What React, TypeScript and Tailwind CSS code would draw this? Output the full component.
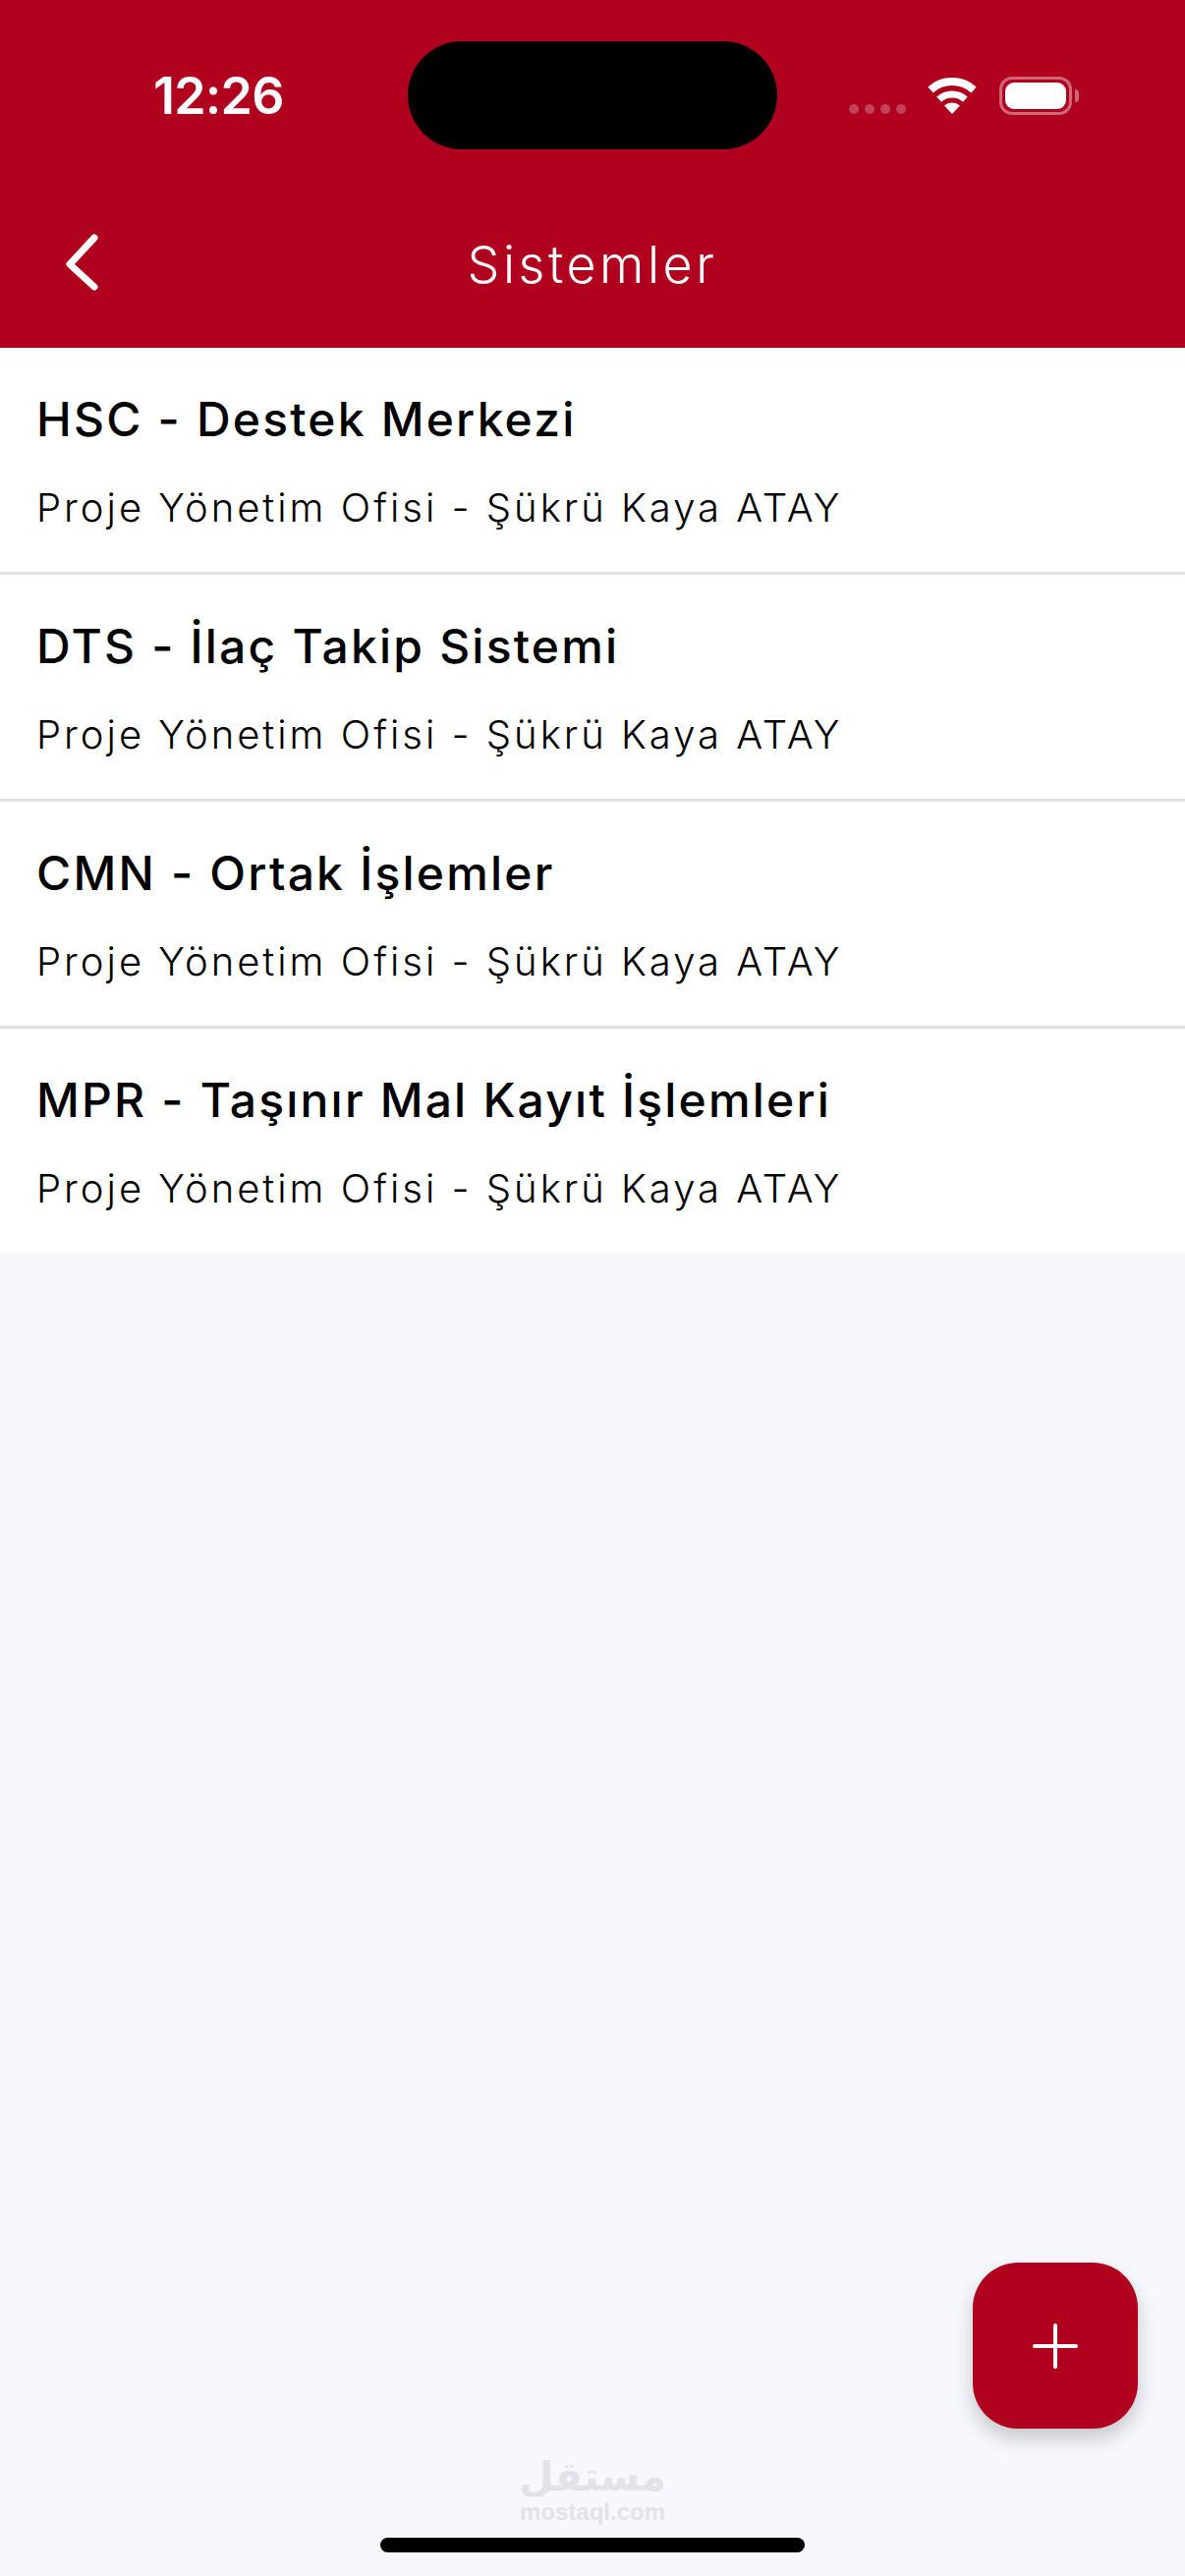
const systems = [
  "HSC - Destek Merkezi",
  "DTS - İlaç Takip Sistemi",
  "CMN - Ortak İşlemler",
  "MPR - Taşınır Mal Kayıt İşlemleri",
];

const StatusBar = () => (
  <div className="flex items-start pt-[42px] h-[152px]">
    <span className="w-[415px] pl-[156px] pt-[25px] shrink-0 text-[52px] leading-[62px] font-semibold text-white tracking-[-0.8px] whitespace-nowrap">
      12:26
    </span>
    <div className="w-[376px] h-[110px] shrink-0 rounded-[55px] bg-black" />
    <div className="flex items-center gap-[6px] ml-[73px] mt-[64px] shrink-0">
      <span className="w-[10px] h-[10px] rounded-full bg-white/25" />
      <span className="w-[10px] h-[10px] rounded-full bg-white/25" />
      <span className="w-[10px] h-[10px] rounded-full bg-white/25" />
      <span className="w-[10px] h-[10px] rounded-full bg-white/25" />
    </div>
    <svg className="ml-[22px] mt-[37px] shrink-0" width="50" height="37" viewBox="0 0 50 37" fill="none">
      <path d="M3 12.5A33 33 0 0 1 47 12.5" stroke="white" strokeWidth="8" />
      <path d="M11.6 22.1A20 20 0 0 1 38.4 22.1" stroke="white" strokeWidth="7" />
      <path d="M25 37L17 28.5A12 12 0 0 1 33 28.5Z" fill="white" />
    </svg>
    <div className="flex items-center ml-[23px] mt-[36px] shrink-0">
      <div className="w-[74px] h-[39px] rounded-[13px] border-[3px] border-white/40 p-[3px]">
        <div className="w-full h-full rounded-[9px] bg-white" />
      </div>
      <div className="w-[4px] h-[13px] ml-[3px] rounded-r-full bg-white/40" />
    </div>
  </div>
);

const Header = () => (
  <header className="h-[354px] bg-[#b0021f] flex flex-col">
    <StatusBar />
    <div className="relative flex-1 flex items-center justify-center">
      <svg className="absolute left-[64px] top-[86px]" width="40" height="60" viewBox="0 0 40 60" fill="none">
        <path d="M32 4L7 31L32 54" stroke="white" strokeWidth="7" strokeLinecap="round" strokeLinejoin="round" />
      </svg>
      <h1 className="mt-[34px] text-[52px] leading-[60px] font-light text-white tracking-[3.5px]">Sistemler</h1>
    </div>
  </header>
);

const App = () => {
  return (
    <div className="relative w-[1206px] h-[2622px] overflow-hidden bg-[#f7f8fd] flex flex-col font-['Inter',sans-serif]">
      <Header />
      <ul className="bg-white">
        {systems.map((name, i) => (
          <li key={name} className={i < systems.length - 1 ? "h-[231px] border-b-[3px] border-[#e0e0e6] pl-[37px]" : "h-[228px] pl-[37px]"}>
            <p className="pt-[45px] text-[48px] leading-[56px] font-[470] text-black tracking-[2.2px] whitespace-nowrap">{name}</p>
            <p className="pt-[39px] text-[40px] leading-[46px] font-light text-black tracking-[3px] whitespace-nowrap">
              Proje Yönetim Ofisi - Şükrü Kaya ATAY
            </p>
          </li>
        ))}
      </ul>
      <div className="flex-1" />
      <div className="flex flex-col items-center text-[#e2e2e8] font-['DejaVu_Sans',sans-serif] font-bold">
        <span className="text-[41px] leading-[44px]" dir="rtl">مستقل</span>
        <span className="mt-[2px] text-[24px] leading-[24px] font-['Liberation_Sans',sans-serif]">mostaql.com</span>
      </div>
      <div className="flex justify-center pt-[14px] pb-[24px]">
        <div className="w-[432px] h-[15px] rounded-full bg-black" />
      </div>
      <button type="button" className="absolute left-[990px] top-[2303px] w-[168px] h-[169px] rounded-[46px] bg-[#b0021f] shadow-[0_10px_20px_rgba(0,0,0,0.2)] flex items-center justify-center">
        <svg width="46" height="46" viewBox="0 0 46 46" fill="none">
          <path d="M23 2V44M2 23H44" stroke="white" strokeWidth="4" strokeLinecap="round" />
        </svg>
      </button>
    </div>
  );
};

export default App;
